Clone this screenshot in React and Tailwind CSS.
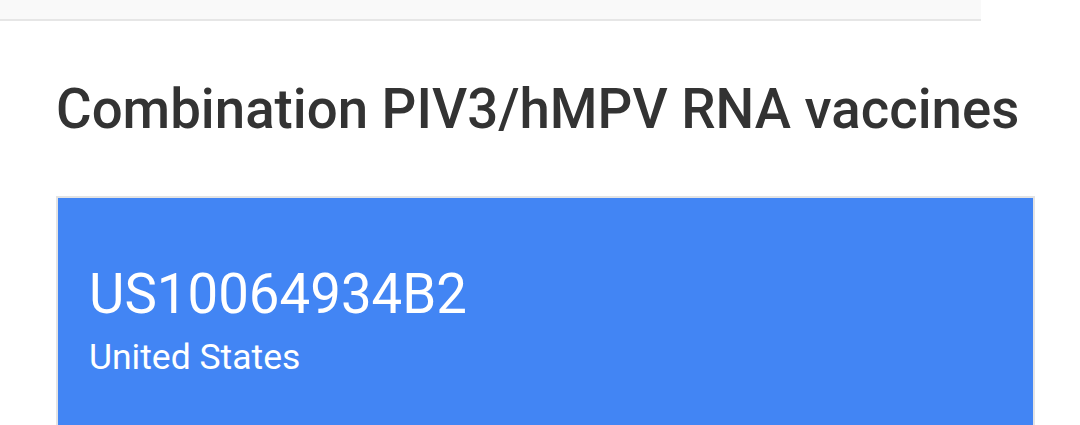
export default function App() {
  return (
    <div className="w-[1080px] h-[425px] bg-white overflow-hidden" style={{ fontFamily: "Roboto, 'Liberation Sans', sans-serif" }}>
      <div className="w-[981px] h-[21px] bg-[#f9f9f9] border-b-2 border-[#e6e6e6]" />
      <div className="px-[56px]">
        <h1 className="mt-[55px] text-[54.6px] leading-[66px] font-medium text-[#333333] whitespace-nowrap">
          Combination PIV3/hMPV RNA vaccines
        </h1>
        <div className="mt-[54px] w-[979px] h-[240px] border-2 border-b-0 border-[#e3e3e3] bg-[#4285f4] pl-[31px] pt-[64px] text-white">
          <div className="text-[54.6px] leading-[64px] font-normal">US10064934B2</div>
          <div className="mt-[10px] text-[35.5px] leading-[42px] font-normal">United States</div>
        </div>
      </div>
    </div>
  );
}
